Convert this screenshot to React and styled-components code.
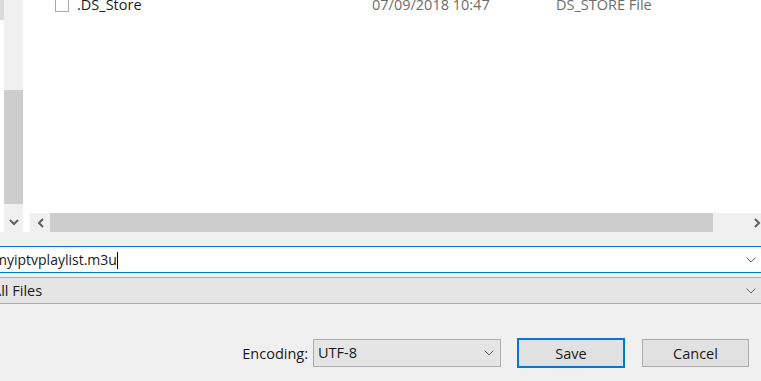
import React from 'react';
import styled, { createGlobalStyle } from 'styled-components';

const GlobalStyle = createGlobalStyle`
  html, body {
    margin: 0;
    padding: 0;
    background: #f0f0f0;
  }
  body {
    font-family: "Open Sans", "Noto Sans", sans-serif;
    font-size: 14.5px;
    color: #1a1a1a;
  }
`;

const Dialog = styled.div`
  width: 761px;
  height: 381px;
  overflow: hidden;
  display: flex;
  flex-direction: column;
  background: #f0f0f0;
`;

/* 탐색기 영역 : 스크롤바 + 파일 목록 */
const Browser = styled.div`
  display: grid;
  grid-template-columns: 4px 19px 7px 1fr;
  grid-template-rows: 213px 19px;
  flex-shrink: 0;
`;

const Edge = styled.div`
  grid-column: 1;
  grid-row: 1 / span 2;
  background: #fff;
  display: flex;
  flex-direction: column;
`;

const EdgeMark = styled.div`
  height: 20px;
  background: #dadada;
`;

const VTrack = styled.div`
  grid-column: 2;
  grid-row: 1;
  background: #f0f0f0;
  display: flex;
  flex-direction: column;
  padding: 90px 0 9px;
`;

const Thumb = styled.div`
  flex: ${p => (p.$grow ? 1 : 'none')};
  width: ${p => p.$width || 'auto'};
  background: #cdcdcd;
`;

const ArrowCell = styled.div`
  grid-column: ${p => p.$col};
  grid-row: 2;
  background: ${p => p.$bg || '#f0f0f0'};
  display: flex;
  align-items: center;
  justify-content: center;
`;

const ListPane = styled.div`
  grid-column: 3 / span 2;
  grid-row: 1;
  background: #fff;
  overflow: hidden;
`;

const FileRow = styled.div`
  display: grid;
  grid-template-columns: 14px 287px 176px auto;
  column-gap: 8px;
  align-items: center;
  height: 22px;
  margin-top: -6px;
  padding-left: 32px;
  white-space: nowrap;
`;

const Check = styled.span`
  width: 12px;
  height: 12px;
  border: 1px solid #a9a9a9;
  background: #fff;
`;

const Cell = styled.span`
  color: ${p => (p.$muted ? '#6d6d6d' : '#1a1a1a')};
  line-height: 22px;
`;

const HScroll = styled.div`
  grid-column: 4;
  grid-row: 2;
  width: 737px;
  display: flex;
  background: #f0f0f0;
`;

const ScrollButton = styled.div`
  width: 20px;
  flex-shrink: 0;
  display: flex;
  align-items: center;
  justify-content: center;
`;

const HTrack = styled.div`
  flex: 1;
`;

/* 파일 이름 / 형식 입력 */
const Fields = styled.div`
  margin: 14px -4px 0 -12px;
  display: flex;
  flex-direction: column;
  gap: 4px;
`;

const NameInput = styled.div`
  height: 25px;
  border: 1px solid #0078d7;
  background: #fff;
  display: flex;
  align-items: center;
  padding: 0 8px 0 5px;
  font-size: 14px;
`;

const TypeCombo = styled.div`
  height: 25px;
  border: 1px solid #adadad;
  background: #e5e5e5;
  display: flex;
  align-items: center;
  padding: 0 8px 0 3px;
`;

const FieldText = styled.span`
  flex: 1;
  white-space: nowrap;
  line-height: 20px;
`;

const Caret = styled.span`
  display: inline-block;
  width: 1px;
  height: 17px;
  background: #000;
  vertical-align: -4px;
`;

/* 하단 버튼 줄 */
const Footer = styled.div`
  display: flex;
  align-items: center;
  justify-content: flex-end;
  padding: 34px 12px 0 0;
`;

const Label = styled.span`
  margin-right: 5px;
`;

const Select = styled.div`
  box-sizing: border-box;
  width: 188px;
  height: 28px;
  border: 1px solid #adadad;
  background: #e5e5e5;
  display: flex;
  align-items: center;
  justify-content: space-between;
  padding: 0 6px 0 4px;
  margin-right: 16px;
`;

const Button = styled.button`
  font: inherit;
  color: #1a1a1a;
  background: #e1e1e1;
  box-sizing: border-box;
  width: ${p => (p.$primary ? '108px' : '107px')};
  height: ${p => (p.$primary ? '30px' : '28px')};
  border: ${p => (p.$primary ? '2px solid #0078d7' : '1px solid #adadad')};
  padding: 0;
  margin-left: ${p => (p.$primary ? '0' : '17px')};
`;

const Chevron = ({ color = '#6a6a6a' }) => (
  <svg width="10" height="6" viewBox="0 0 10 6">
    <path d="M0.5 0.5 L5 5 L9.5 0.5" fill="none" stroke={color} strokeWidth="1" />
  </svg>
);

const ArrowDown = () => (
  <svg width="10" height="7" viewBox="0 0 10 7">
    <path d="M1 1 L5 5 L9 1" fill="none" stroke="#606060" strokeWidth="2" />
  </svg>
);

const ArrowLeft = () => (
  <svg width="7" height="10" viewBox="0 0 7 10">
    <path d="M6 1 L2 5 L6 9" fill="none" stroke="#606060" strokeWidth="2" />
  </svg>
);

const ArrowRight = () => (
  <svg width="7" height="10" viewBox="0 0 7 10">
    <path d="M1 1 L5 5 L1 9" fill="none" stroke="#606060" strokeWidth="2" />
  </svg>
);

const App = () => {
  return (
    <>
      <GlobalStyle />
      <Dialog>
        <Browser>
          <Edge>
            <EdgeMark />
          </Edge>
          <VTrack>
            <Thumb $grow />
          </VTrack>
          <ListPane>
            <FileRow>
              <Check />
              <Cell>.DS_Store</Cell>
              <Cell $muted>07/09/2018 10:47</Cell>
              <Cell $muted>DS_STORE File</Cell>
            </FileRow>
          </ListPane>
          <ArrowCell $col={2}>
            <ArrowDown />
          </ArrowCell>
          <ArrowCell $col={3} $bg="#fff" />
          <HScroll>
            <ScrollButton>
              <ArrowLeft />
            </ScrollButton>
            <Thumb $width="663px" />
            <HTrack />
            <ScrollButton>
              <ArrowRight />
            </ScrollButton>
          </HScroll>
        </Browser>

        <Fields>
          <NameInput>
            <FieldText>
              myiptvplaylist.m3u<Caret />
            </FieldText>
            <Chevron />
          </NameInput>
          <TypeCombo>
            <FieldText>All Files</FieldText>
            <Chevron />
          </TypeCombo>
        </Fields>

        <Footer>
          <Label>Encoding:</Label>
          <Select>
            <FieldText>UTF-8</FieldText>
            <Chevron />
          </Select>
          <Button $primary>Save</Button>
          <Button>Cancel</Button>
        </Footer>
      </Dialog>
    </>
  );
};

export default App;
